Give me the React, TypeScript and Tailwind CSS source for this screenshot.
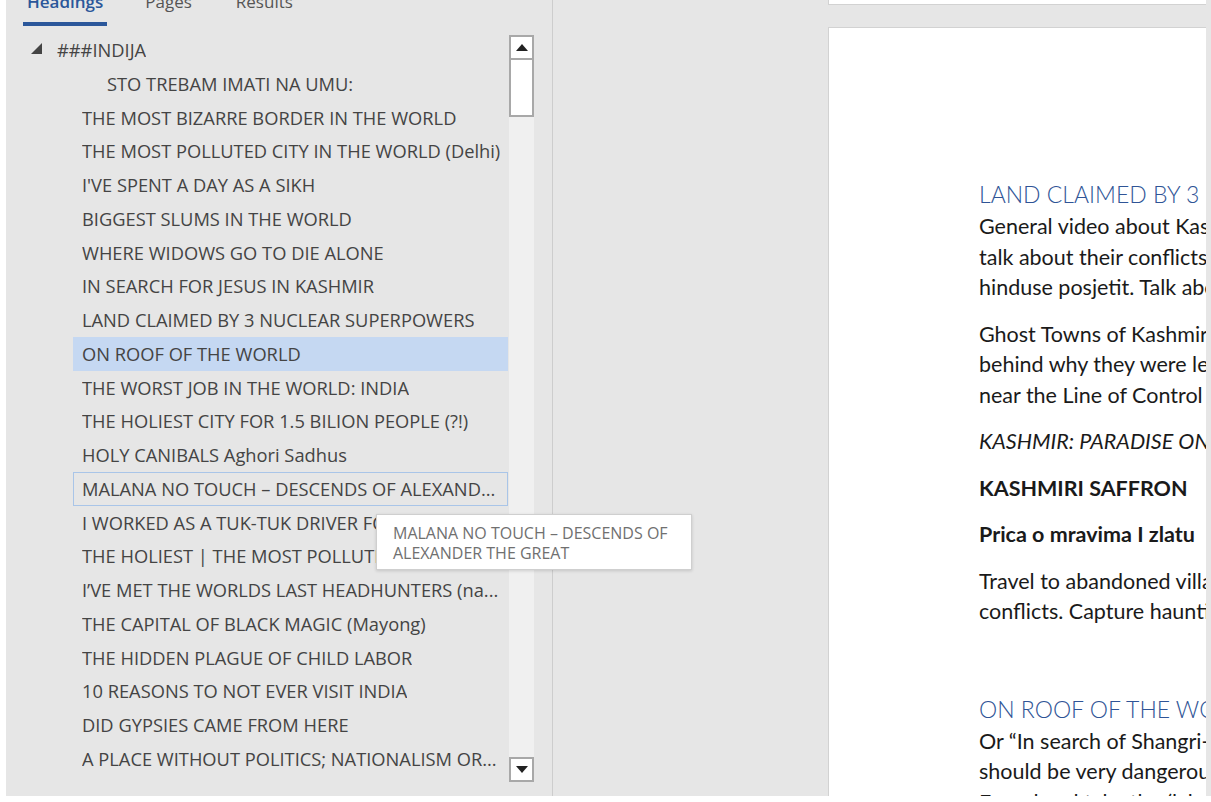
import React from 'react';

type Heading = { text: string; level: 1 | 2 | 3; state?: 'selected' | 'hover' };

const headings: Heading[] = [
  { text: '###INDIJA', level: 1 },
  { text: 'STO TREBAM IMATI NA UMU:', level: 3 },
  { text: 'THE MOST BIZARRE BORDER IN THE WORLD', level: 2 },
  { text: 'THE MOST POLLUTED CITY IN THE WORLD (Delhi)', level: 2 },
  { text: "I'VE SPENT A DAY AS A SIKH", level: 2 },
  { text: 'BIGGEST SLUMS IN THE WORLD', level: 2 },
  { text: 'WHERE WIDOWS GO TO DIE ALONE', level: 2 },
  { text: 'IN SEARCH FOR JESUS IN KASHMIR', level: 2 },
  { text: 'LAND CLAIMED BY 3 NUCLEAR SUPERPOWERS', level: 2 },
  { text: 'ON ROOF OF THE WORLD', level: 2, state: 'selected' },
  { text: 'THE WORST JOB IN THE WORLD: INDIA', level: 2 },
  { text: 'THE HOLIEST CITY FOR 1.5 BILION PEOPLE (?!)', level: 2 },
  { text: 'HOLY CANIBALS Aghori Sadhus', level: 2 },
  { text: 'MALANA NO TOUCH – DESCENDS OF ALEXAND...', level: 2, state: 'hover' },
  { text: 'I WORKED AS A TUK-TUK DRIVER FOR A DAY', level: 2 },
  { text: 'THE HOLIEST | THE MOST POLLUTED RIVER', level: 2 },
  { text: 'I’VE MET THE WORLDS LAST HEADHUNTERS (na...', level: 2 },
  { text: 'THE CAPITAL OF BLACK MAGIC (Mayong)', level: 2 },
  { text: 'THE HIDDEN PLAGUE OF CHILD LABOR', level: 2 },
  { text: '10 REASONS TO NOT EVER VISIT INDIA', level: 2 },
  { text: 'DID GYPSIES CAME FROM HERE', level: 2 },
  { text: 'A PLACE WITHOUT POLITICS; NATIONALISM OR...', level: 2 },
];

function HeadingRow({ h }: { h: Heading }) {
  if (h.level === 1) {
    return (
      <div className="h-[33.75px] flex items-center pl-[25px]">
        <svg width="12" height="12" viewBox="0 0 12 12" className="mr-[14px] mt-[-1px]">
          <polygon points="11,0 11,11 0,11" fill="#444" />
        </svg>
        <span className="truncate">{h.text}</span>
      </div>
    );
  }
  const box =
    h.state === 'selected'
      ? 'bg-[#c5d8f2] border-[#c5d8f2]'
      : h.state === 'hover'
        ? 'border-[#a9c5e8]'
        : 'border-transparent';
  return (
    <div className={`h-[33.75px] ml-[67px] mr-[1px] flex items-center border ${box} ${h.level === 3 ? 'pl-[33px]' : 'pl-[8px]'} pr-[4px]`}>
      <span className="whitespace-nowrap overflow-hidden">{h.text}</span>
    </div>
  );
}

function ScrollArrow({ up }: { up?: boolean }) {
  return (
    <div className="h-[25px] bg-white border-2 border-[#a8a8a8] flex items-center justify-center">
      <svg width="12" height="7" viewBox="0 0 12 7">
        <polygon points={up ? '6,0 12,7 0,7' : '0,0 12,0 6,7'} fill="#222" />
      </svg>
    </div>
  );
}

function NavPane() {
  return (
    <aside className="ml-[6px] w-[546px] bg-[#e6e6e6] relative flex flex-col font-['Open_Sans',sans-serif]">
      {/* tabs */}
      <div className="h-[35px] flex gap-[38px] pl-[17px] text-[17px] leading-[20px]">
        <div className="flex flex-col -mt-[8px]">
          <span className="px-[4px] font-semibold text-[#2b579a]">Headings</span>
          <div className="mt-[10px] h-[4px] bg-[#2b579a]" />
        </div>
        <span className="-mt-[8px] text-[#555]">Pages</span>
        <span className="-mt-[8px] ml-[6px] text-[#555]">Results</span>
      </div>

      {/* tree + scrollbar */}
      <div className="flex h-[747px]">
        <div className="w-[503px] text-[18.3px] text-[#444] -mt-[2px]">
          {headings.map((h, i) => (
            <HeadingRow key={i} h={h} />
          ))}
        </div>
        <div className="w-[25px] flex flex-col bg-[#f0f0f0]">
          <ScrollArrow up />
          <div className="h-[59px] -mt-[2px] bg-white border-2 border-[#a8a8a8]" />
          <div className="flex-1" />
          <ScrollArrow />
        </div>
      </div>

      {/* tooltip */}
      <div className="absolute left-[370px] top-[514px] w-[316px] bg-white border border-[#cfcfcf] shadow-[0_1px_3px_rgba(0,0,0,0.15)] pl-[16px] pt-[8px] pb-[6px] text-[16px] leading-[20px] text-[#707070]">
        <div>MALANA NO TOUCH – DESCENDS OF</div>
        <div>ALEXANDER THE GREAT</div>
      </div>
    </aside>
  );
}

function Line({ children, className = '' }: { children: React.ReactNode; className?: string }) {
  return <div className={`whitespace-nowrap ${className}`}>{children}</div>;
}

function DocArea() {
  return (
    <main className="flex-1 bg-[#e6e6e6] flex flex-col pl-[275px] pr-[5px] overflow-hidden">
      <div className="h-[5px] bg-white border-b border-l border-[#d2d2d2] shrink-0" />
      <div className="mt-[22px] flex-1 bg-white border-t border-l border-[#d2d2d2] overflow-hidden pl-[150px] pt-[149px] font-['Lato',sans-serif] text-[21.5px] leading-[30.5px] text-[#1a1a1a]">
        <Line className="text-[23px] leading-[34px] text-[#2f5496] font-light">LAND CLAIMED BY 3 NUCLEAR SUPERPOWERS</Line>
        <div className="mb-[16px]">
          <Line>General video about Kashmir and its people,</Line>
          <Line>talk about their conflicts, why Kashmir has</Line>
          <Line>hinduse posjetit. Talk about the army and</Line>
        </div>
        <div className="mb-[16px]">
          <Line>Ghost Towns of Kashmir – explore the story</Line>
          <Line>behind why they were left abandoned, mostly</Line>
          <Line>near the Line of Control or the borders.</Line>
        </div>
        <Line className="mb-[16px] italic">KASHMIR: PARADISE ON EARTH</Line>
        <Line className="mb-[16px] font-bold">KASHMIRI SAFFRON</Line>
        <Line className="mb-[16px] font-bold">Prica o mravima I zlatu</Line>
        <div>
          <Line>Travel to abandoned villages destroyed by</Line>
          <Line>conflicts. Capture haunting images of life</Line>
        </div>
        <Line className="mt-[65px] text-[23px] leading-[34px] text-[#2f5496] font-light">ON ROOF OF THE WORLD</Line>
        <Line>Or “In search of Shangri-La” – this trip</Line>
        <Line>should be very dangerous but rewarding</Line>
        <Line>Found and take the (lake of blood)</Line>
      </div>
    </main>
  );
}

export default function App() {
  return (
    <div className="w-[1211px] h-[802px] bg-white overflow-hidden flex flex-col">
      <div className="flex h-[796px]">
        <NavPane />
        <div className="w-px bg-[#cdcdcd]" />
        <DocArea />
      </div>
    </div>
  );
}
